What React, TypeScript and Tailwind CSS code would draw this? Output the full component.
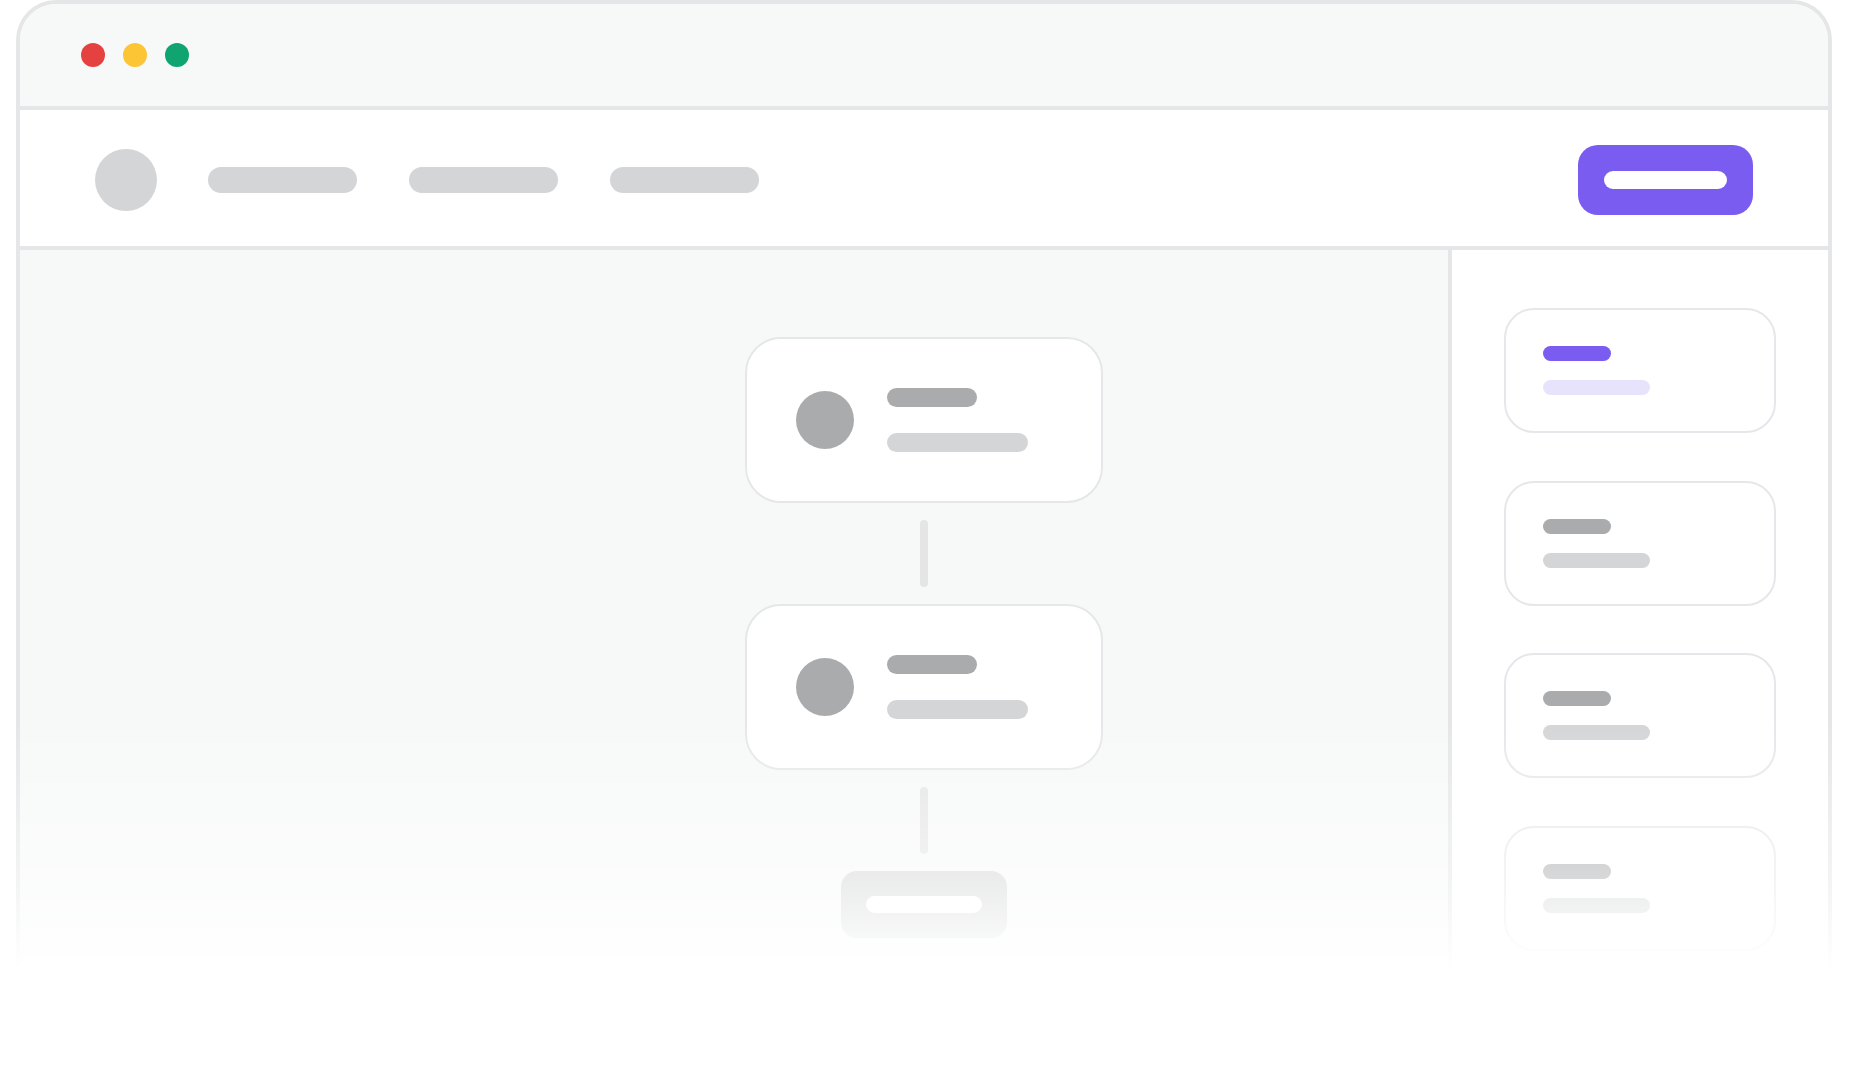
import React from "react";

const NAV_ITEMS = ["a", "b", "c"];

function Dots() {
  return (
    <div className="flex items-center gap-[18px]">
      <span className="h-6 w-6 rounded-full bg-[#e54141]" />
      <span className="h-6 w-6 rounded-full bg-[#fcc535]" />
      <span className="h-6 w-6 rounded-full bg-[#10a570]" />
    </div>
  );
}

function FlowCard() {
  return (
    <div className="flex h-[166px] w-[358px] items-center gap-[33px] rounded-[36px] border-2 border-[#e6e7ea] bg-white pl-[49px]">
      <span className="h-[58px] w-[58px] rounded-full bg-[#aaabad]" />
      <div className="flex flex-col gap-[26px]">
        <span className="h-[19px] w-[90px] rounded-full bg-[#aaabad]" />
        <span className="h-[19px] w-[141px] rounded-full bg-[#d4d5d7]" />
      </div>
    </div>
  );
}

function Connector() {
  return <span className="my-[17px] h-[67px] w-2 rounded-full bg-[#e5e5e6]" />;
}

function SideCard({ active = false }: { active?: boolean }) {
  return (
    <div className="flex h-[125px] flex-col gap-[19px] rounded-[30px] border-2 border-[#e6e7eb] bg-white pl-[37px] pt-[36px]">
      <span className={`h-[15px] w-[68px] rounded-full ${active ? "bg-[#7a5cf0]" : "bg-[#aaabad]"}`} />
      <span className={`h-[15px] w-[107px] rounded-full ${active ? "bg-[#e8e3fd]" : "bg-[#d4d5d7]"}`} />
    </div>
  );
}

export default function App() {
  return (
    <div className="relative h-[1080px] w-full overflow-hidden bg-white pl-4 pr-[17px]">
      <div className="flex h-full flex-col overflow-hidden rounded-t-[40px] border-4 border-b-0 border-[#e5e6e8]">
        {/* title bar */}
        <div className="flex h-[106px] shrink-0 items-center border-b-4 border-[#e5e6e8] bg-[#f7f8f8] pl-[61px]">
          <Dots />
        </div>

        {/* app header */}
        <div className="flex h-[140px] shrink-0 items-center border-b-4 border-[#e5e6e8] bg-white pl-[75px] pr-[75px] pt-1">
          <span className="h-[62px] w-[62px] rounded-full bg-[#d4d5d7]" />
          <div className="ml-[51px] flex gap-[52px]">
            {NAV_ITEMS.map((k) => (
              <span key={k} className="h-[26px] w-[149px] rounded-full bg-[#d4d5d7]" />
            ))}
          </div>
          <div className="ml-auto flex h-[70px] w-[175px] items-center justify-center rounded-[20px] bg-[#7a5cf0]">
            <span className="h-[18px] w-[123px] rounded-full bg-white" />
          </div>
        </div>

        {/* body */}
        <div className="flex min-h-0 flex-1">
          <div className="flex flex-1 flex-col items-center bg-[#f7f8f8] pl-[380px] pt-[87px]">
            <FlowCard />
            <Connector />
            <FlowCard />
            <Connector />
            <div className="flex h-[67px] w-[166px] items-center justify-center rounded-[16px] bg-[#d4d5d7]">
              <span className="h-[17px] w-[116px] rounded-full bg-white" />
            </div>
          </div>
          <aside className="flex w-[380px] shrink-0 flex-col gap-[47.5px] border-l-4 border-[#e5e6e8] bg-white px-[52px] pt-[58px]">
            <SideCard active />
            <SideCard />
            <SideCard />
            <SideCard />
          </aside>
        </div>
      </div>

      {/* bottom fade */}
      <div className="pointer-events-none absolute inset-x-0 bottom-0 top-[720px] bg-[linear-gradient(to_bottom,rgba(255,255,255,0)_0px,rgba(255,255,255,0.55)_160px,#ffffff_250px)]" />
    </div>
  );
}
